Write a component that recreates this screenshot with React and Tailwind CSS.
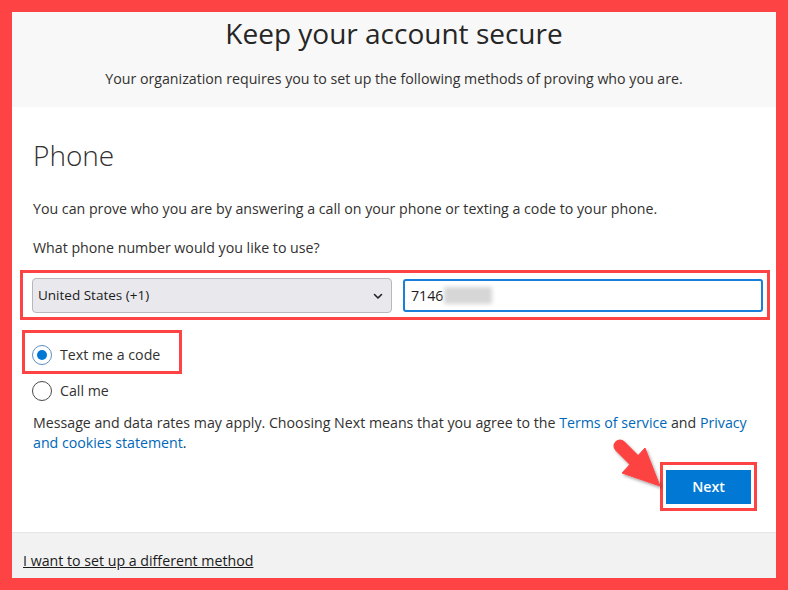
import React from "react";

const font = { fontFamily: '"Open Sans", "Noto Sans", sans-serif' };

export default function App() {
  return (
    <div className="relative w-[788px] h-[590px] bg-[#fd4343] p-3" style={font}>
      <div className="flex flex-col h-full bg-white text-[#323130]">
        {/* header */}
        <div className="h-[95px] shrink-0 bg-[#f8f8f8] flex flex-col items-center">
          <div className="pt-[3px] text-[28px] leading-[36px] text-[#262626]">Keep your account secure</div>
          <div className="mt-[18px] text-[14.2px] leading-5 text-[#323130]">
            Your organization requires you to set up the following methods of proving who you are.
          </div>
        </div>

        {/* body */}
        <div className="flex-1 flex flex-col">
          <div className="pl-[21px] pt-[30px] text-[28px] leading-9 font-light text-[#323130]">Phone</div>
          <div className="pl-[21px] mt-[26px] text-[14.2px] leading-5">
            You can prove who you are by answering a call on your phone or texting a code to your phone.
          </div>
          <div className="pl-[21px] mt-[19px] text-[14.2px] leading-5">What phone number would you like to use?</div>

          <div className="ml-[8px] mt-[12px] w-[750px] h-[50px] border-[3px] border-[#fd4343] flex items-start pl-[9px] pt-[5px] gap-[11px]">
            <div className="w-[360px] h-[35px] rounded-[4px] border border-[#b8b8bc] bg-[#e9e9ed] flex items-center justify-between pl-[5px] pr-[7px]">
              <span className="text-[13.5px] text-[#1b1b1b]">United States (+1)</span>
              <svg width="12" height="12" viewBox="0 0 12 12" fill="none">
                <path d="M2.5 4.5 L6 8 L9.5 4.5" stroke="#222" strokeWidth="1.6" strokeLinecap="round" strokeLinejoin="round" />
              </svg>
            </div>
            <div className="mt-[1px] w-[360px] h-[33px] rounded-[3px] border-2 border-[#1a7fd8] bg-white flex items-center pl-[6px]">
              <span className="text-[14.2px] text-[#1b1b1b]">7146</span>
              <span className="ml-[1px] w-[48px] h-[17px] bg-[#d6d6d6] blur-[2px]"></span>
            </div>
          </div>

          <div className="ml-[10px] mt-[10px] w-[160px] h-[44px] border-[3px] border-[#fd4343] flex items-center pl-[7px] pt-[5px] gap-[8px]">
            <span className="w-[20px] h-[20px] rounded-full border-[1.5px] border-[#5c8fc4] flex items-center justify-center">
              <span className="w-[10px] h-[10px] rounded-full bg-[#0078d4]"></span>
            </span>
            <span className="text-[14.2px] leading-5">Text me a code</span>
          </div>

          <div className="ml-[20px] mt-[7px] h-[20px] flex items-center gap-[8px]">
            <span className="w-[20px] h-[20px] rounded-full border-[1.5px] border-[#4a4a4a]"></span>
            <span className="text-[14.2px] leading-5">Call me</span>
          </div>

          <div className="pl-[21px] mt-[12px] text-[14.2px] leading-5 whitespace-nowrap">
            Message and data rates may apply. Choosing Next means that you agree to the{" "}
            <span className="text-[#0067b8]">Terms of service</span> and{" "}
            <span className="text-[#0067b8]">Privacy</span>
            <br />
            <span className="text-[#0067b8]">and cookies statement</span>.
          </div>

          <div className="self-end mr-[19px] mt-[9px] w-[97px] h-[49px] border-[3px] border-[#fd4343] flex items-center justify-center">
            <div className="w-[85px] h-[34px] bg-[#0078d4] text-white text-[14.2px] font-semibold flex items-center justify-center">
              Next
            </div>
          </div>
        </div>

        {/* footer */}
        <div className="h-[46px] shrink-0 bg-[#f2f2f2] border-t border-[#e6e6e6] pl-[11px] pt-[15px]">
          <span className="text-[14.2px] leading-5 underline text-[#1b1b1b]">I want to set up a different method</span>
        </div>
      </div>

      {/* annotation arrow */}
      <svg className="absolute left-[605px] top-[435px]" width="66" height="62" viewBox="0 0 66 62">
        <defs>
          <filter id="sh" x="-30%" y="-30%" width="160%" height="160%">
            <feDropShadow dx="1.5" dy="2" stdDeviation="1.8" floodColor="#000" floodOpacity="0.35" />
          </filter>
        </defs>
        <g filter="url(#sh)" fill="#fd4343" stroke="#fd4343">
          <line x1="15" y1="11" x2="31" y2="27" strokeWidth="13" strokeLinecap="round" />
          <polygon points="17,38 40,13 55,51" strokeWidth="1" strokeLinejoin="round" />
        </g>
      </svg>
    </div>
  );
}
